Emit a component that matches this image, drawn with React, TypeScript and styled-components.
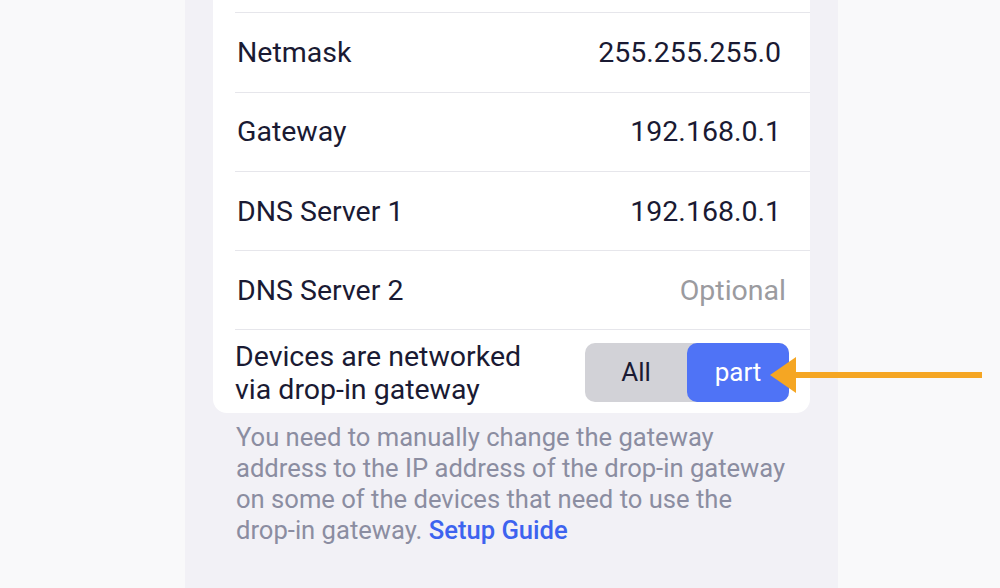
import styled, { createGlobalStyle } from "styled-components";

const GlobalStyle = createGlobalStyle`
  html, body {
    margin: 0;
    padding: 0;
    background: #f9f9fa;
    overflow: hidden;
  }
  body {
    font-family: Roboto, "Liberation Sans", sans-serif;
  }
`;

const Page = styled.div`
  position: relative;
  width: 1000px;
  height: 588px;
  display: flex;
  justify-content: flex-start;
  padding-left: 185px;
  box-sizing: border-box;
`;

const Phone = styled.div`
  width: 653px;
  height: 100%;
  background: #f2f1f6;
  padding: 0 28px;
  box-sizing: border-box;
`;

const Card = styled.div`
  margin-top: -67px;
  background: #ffffff;
  border-radius: 0 0 14px 14px;
  padding-left: 22px;
`;

const Row = styled.div<{ $tall?: boolean }>`
  display: flex;
  align-items: center;
  justify-content: space-between;
  height: ${(p) => (p.$tall ? "84px" : "79.3px")};
  box-sizing: border-box;
  border-top: 1px solid #e6e6eb;
  padding-left: 2px;
  padding-right: 29px;

  &:first-child {
    border-top: none;
  }
`;

const Label = styled.span`
  font-size: 28.5px;
  color: #1a1a33;
`;

const MultiLabel = styled(Label)`
  line-height: 33px;
  margin-left: -2px;
  margin-top: 2px;
`;

const Value = styled.span<{ $placeholder?: boolean }>`
  font-size: 28.5px;
  color: ${(p) => (p.$placeholder ? "#9b9b9f" : "#1a1a33")};
  margin-right: ${(p) => (p.$placeholder ? "-5px" : "0")};
`;

const Segmented = styled.div`
  display: flex;
  width: 204px;
  height: 59px;
  border-radius: 10px;
  background: #d2d2d7;
  margin-right: -8px;
  margin-top: 1px;
`;

const Segment = styled.div<{ $active?: boolean }>`
  flex: 1;
  display: flex;
  align-items: center;
  justify-content: center;
  border-radius: 10px;
  font-size: 26px;
  background: ${(p) => (p.$active ? "#4f73f6" : "transparent")};
  color: ${(p) => (p.$active ? "#ffffff" : "#1a1a33")};
`;

const Hint = styled.p`
  margin: 9px 0 0;
  padding: 0 0 0 23px;
  font-size: 25.6px;
  line-height: 30.8px;
  color: #8b8da1;
  white-space: nowrap;
`;

const GuideLink = styled.a`
  color: #3d63ef;
  font-weight: 500;
  text-decoration: none;
`;

const Arrow = styled.svg`
  position: absolute;
  left: 768px;
  top: 355px;
`;

const rows = [
  { label: "IP Address", value: "192.168.0.2" },
  { label: "Netmask", value: "255.255.255.0" },
  { label: "Gateway", value: "192.168.0.1" },
  { label: "DNS Server 1", value: "192.168.0.1" },
];

export default function App() {
  return (
    <>
      <GlobalStyle />
      <Page>
        <Phone>
          <Card>
            {rows.map((r) => (
              <Row key={r.label}>
                <Label>{r.label}</Label>
                <Value>{r.value}</Value>
              </Row>
            ))}
            <Row>
              <Label>DNS Server 2</Label>
              <Value $placeholder>Optional</Value>
            </Row>
            <Row $tall>
              <MultiLabel>
                Devices are networked
                <br />
                via drop-in gateway
              </MultiLabel>
              <Segmented>
                <Segment>All</Segment>
                <Segment $active>part</Segment>
              </Segmented>
            </Row>
          </Card>
          <Hint>
            You need to manually change the gateway
            <br />
            address to the IP address of the drop-in gateway
            <br />
            on some of the devices that need to use the
            <br />
            drop-in gateway. <GuideLink href="#">Setup Guide</GuideLink>
          </Hint>
        </Phone>
      </Page>
      <Arrow width="216" height="40" viewBox="0 0 216 40">
        <polygon points="2,20 28,2 28,38" fill="#f5a623" />
        <rect x="26" y="17" width="188" height="6" fill="#f5a623" />
      </Arrow>
    </>
  );
}
